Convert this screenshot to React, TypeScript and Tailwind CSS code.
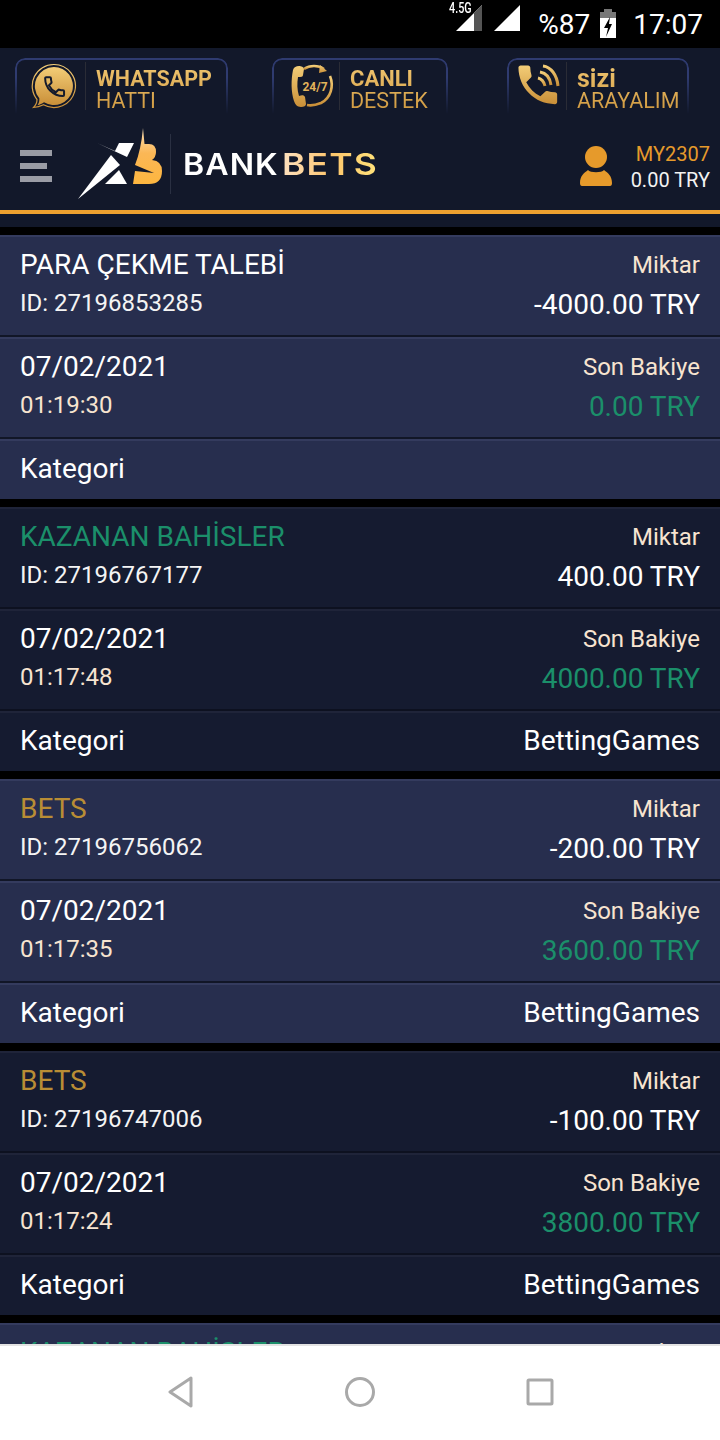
import React from "react";

type Tx = { title: string; titleColor: string; id: string; amount: string; date: string; time: string; balance: string; cat: string };

const txs: Tx[] = [
  { title: "PARA ÇEKME TALEBİ", titleColor: "text-white", id: "27196853285", amount: "-4000.00 TRY", date: "07/02/2021", time: "01:19:30", balance: "0.00 TRY", cat: "" },
  { title: "KAZANAN BAHİSLER", titleColor: "text-[#1b8f6a]", id: "27196767177", amount: "400.00 TRY", date: "07/02/2021", time: "01:17:48", balance: "4000.00 TRY", cat: "BettingGames" },
  { title: "BETS", titleColor: "text-[#b98d35]", id: "27196756062", amount: "-200.00 TRY", date: "07/02/2021", time: "01:17:35", balance: "3600.00 TRY", cat: "BettingGames" },
  { title: "BETS", titleColor: "text-[#b98d35]", id: "27196747006", amount: "-100.00 TRY", date: "07/02/2021", time: "01:17:24", balance: "3800.00 TRY", cat: "BettingGames" },
  { title: "KAZANAN BAHİSLER", titleColor: "text-[#1b8f6a]", id: "27196700000", amount: "400.00 TRY", date: "07/02/2021", time: "01:17:00", balance: "3900.00 TRY", cat: "BettingGames" },
];

function Gold({ id }: { id: string }) {
  return (
    <defs>
      <linearGradient id={id} x1="0" y1="0" x2="0" y2="1">
        <stop offset="0" stopColor="#f3cd77" />
        <stop offset="1" stopColor="#c98f38" />
      </linearGradient>
    </defs>
  );
}

const HANDSET = "M6.62 10.79c1.44 2.83 3.76 5.14 6.59 6.59l2.2-2.2c.27-.27.67-.36 1.02-.24 1.12.37 2.33.57 3.57.57.55 0 1 .45 1 1V20c0 .55-.45 1-1 1-9.39 0-17-7.61-17-17 0-.55.45-1 1-1h3.5c.55 0 1 .45 1 1 0 1.25.2 2.45.57 3.57.11.35.03.74-.25 1.02l-2.2 2.2z";

function WhatsIcon() {
  return (
    <svg width="46" height="46" viewBox="0 0 46 46" className="shrink-0">
      <Gold id="g1" />
      <path d="M23 1.500a21.500 21.500 0 1 1-10.500 40.300C9 43.500 6 44.300 2.500 44.500 5 42 6 39.500 6 36.500A21.500 21.500 0 0 1 23 1.500z" fill="none" stroke="url(#g1)" strokeWidth="1.200" />
      <path d="M23 4a19 19 0 1 1-10 35.200c-2 1.500-4 2.400-6.500 3 1.500-2 2-4.200 1.800-7A19 19 0 0 1 23 4z" fill="url(#g1)" />
      <g transform="translate(11 11) scale(1.050)">
        <path d={HANDSET} fill="none" stroke="#141a2c" strokeWidth="1.900" />
      </g>
    </svg>
  );
}

function SupportIcon() {
  return (
    <svg width="46" height="46" viewBox="0 0 46 46" className="shrink-0">
      <Gold id="g2" />
      <path d="M10 3c-3 0-5 1-6 4-2 10-2 22 1 31 1 3 3 6 7 6 3 0 5-1 5-3l-1-7c-1-2-3-2-6-1-2-6-2-13-1-19 3 0 5 0 5-2l1-6c0-2-3-3-5-3z" fill="url(#g2)" />
      <path d="M15 6c6-4 14-4 20 0" fill="none" stroke="url(#g2)" strokeWidth="2.600" />
      <path d="M31 2l7 6-8 2z" fill="url(#g2)" />
      <path d="M41 13c4 10 1 22-9 27-5 2-9 3-14 2" fill="none" stroke="url(#g2)" strokeWidth="2.600" />
      <text x="26" y="28" textAnchor="middle" fontSize="12" fontWeight="700" fontFamily="Roboto, sans-serif" fill="#e2b35a">24/7</text>
    </svg>
  );
}

function CallIcon() {
  return (
    <svg width="44" height="46" viewBox="0 0 44 46" className="shrink-0">
      <Gold id="g3" />
      <g transform="translate(-6 -4) scale(2.150)">
        <path d={HANDSET} fill="url(#g3)" />
      </g>
      <g fill="none" stroke="url(#g3)" strokeWidth="3">
        <path d="M20 15c4 1 6 4 7 8" />
        <path d="M22 9c6 1 10 6 11 13" />
        <path d="M25 3c8 1 14 9 15 20" />
      </g>
    </svg>
  );
}

function TopButton({ icon, a, b, className, dividerGap, aClass }: { icon: React.ReactNode; a: string; b: string; className: string; dividerGap: string; aClass: string }) {
  return (
    <div className={`relative h-[56px] pt-[4px] flex items-start ${className}`}>
      <div className="absolute inset-0 rounded-t-[10px] border-2 border-b-0 border-[#2f3b70] [mask-image:linear-gradient(to_bottom,black_35%,transparent_100%)]" />
      <div className={`flex items-center h-[48px] ${dividerGap}`}>
        {icon}
      </div>
      <div className="w-px h-[48px] bg-[#2a2c36]" />
      <div className="pl-[10px] flex flex-col pt-[6px] font-['Roboto',sans-serif] bg-gradient-to-b from-[#f2c873] to-[#cf9940] bg-clip-text text-transparent">
        <span className={`font-bold whitespace-nowrap leading-[22px] ${aClass}`}>{a}</span>
        <span className="whitespace-nowrap text-[21.5px] leading-[21px]">{b}</span>
      </div>
    </div>
  );
}

function StatusBar() {
  return (
    <div className="h-[48px] shrink-0 bg-black flex items-start justify-end pr-[17px] relative text-white font-['Roboto',sans-serif]">
      <span className="absolute left-[449px] top-[1px] origin-left scale-x-[0.72] text-[15px] font-medium leading-[15px]">4.5G</span>
      <svg width="26" height="26" viewBox="0 0 26 26" className="mt-[5px] mr-[12px]">
        <path d="M0 26 L26 0 V26 Z" fill="#ffffff" />
        <path d="M18 8 L26 0 V26 H18 Z" fill="#555555" />
      </svg>
      <svg width="26" height="26" viewBox="0 0 26 26" className="mt-[5px] mr-[18px]">
        <path d="M0 26 L26 0 V26 Z" fill="#ffffff" />
      </svg>
      <span className="text-[28px] leading-[50px] mr-[10px]">%87</span>
      <svg width="16" height="30" viewBox="0 0 16 30" className="mt-[9px] mr-[17px]">
        <rect x="4" y="0" width="8" height="3" fill="#777777" />
        <rect x="0" y="3" width="16" height="6" fill="#777777" />
        <rect x="0" y="9" width="16" height="20" fill="#ffffff" />
        <path d="M10 8 L4 19 H8 L6 28 L12 15 H9 Z" fill="#000000" />
      </svg>
      <span className="text-[28px] leading-[50px]">17:07</span>
    </div>
  );
}

function Logo() {
  return (
    <div className="flex items-center ml-[25px]">
      <svg width="90" height="74" viewBox="78 127 90 74" className="shrink-0">
        <defs>
          <linearGradient id="bl" x1="0" y1="0" x2="0" y2="1">
            <stop offset="0" stopColor="#fde0b5" />
            <stop offset="0.45" stopColor="#fbb756" />
            <stop offset="1" stopColor="#fdb63f" />
          </linearGradient>
        </defs>
        <path d="M98 143 L128 157 L135 143 H120 L116 151 Z" fill="#ffffff" />
        <path d="M79 199 L112 155 L121 165 Z" fill="#ffffff" />
        <path d="M106 184 L120 170 L128 184 Z" fill="#ffffff" />
        <path d="M144 128 L145.500 144 H150 Q157 144 157 152 Q157 157 153 160 Q163 161 163 171 Q163 184 150 184 H134 L136 171 L155 173 L136 165 Q142 150 144 128 Z" fill="url(#bl)" />
      </svg>
      <div className="w-px h-[60px] bg-[#2a3042] ml-[3px] mr-[12px]" />
      <span className="inline-block origin-left scale-x-[1.07] font-['Inter',sans-serif] font-semibold text-[30px] tracking-[1px] leading-none text-white">BANK</span>
      <span className="inline-block origin-left scale-x-[1.18] ml-[10px] font-['Inter',sans-serif] font-semibold text-[30px] tracking-[1px] leading-none bg-gradient-to-r from-[#fde1c0] via-[#fdc56c] to-[#ffe27a] bg-clip-text text-transparent">BETS</span>
    </div>
  );
}

function Header() {
  return (
    <div className="shrink-0 h-[179px] bg-[#12182a] flex flex-col">
      <div className="flex pl-[15px] pt-[10px] h-[66px]">
        <TopButton icon={<WhatsIcon />} a="WHATSAPP" aClass="text-[21.5px]" b="HATTI" className="w-[213px]" dividerGap="pl-[16px] pr-[8px]" />
        <TopButton icon={<SupportIcon />} a="CANLI" aClass="text-[22px]" b="DESTEK" className="w-[176px] ml-[44px]" dividerGap="pl-[17px] pr-[4px]" />
        <TopButton icon={<CallIcon />} a="sizi" aClass="text-[25px]" b="ARAYALIM" className="w-[182px] ml-[59px]" dividerGap="pl-[11px] pr-[4px]" />
      </div>
      <div className="flex-1 flex items-center pl-[20px] pr-[10px] pt-[4px]">
        <div className="flex flex-col gap-[7px] w-[32px] shrink-0 mt-[4px]">
          <div className="h-[6px] w-[32px] bg-[#9a9ca5]" />
          <div className="h-[6px] w-[27px] bg-[#9a9ca5]" />
          <div className="h-[6px] w-[32px] bg-[#9a9ca5]" />
        </div>
        <Logo />
        <div className="ml-auto flex items-center mt-[6px]">
          <svg width="34" height="42" viewBox="0 0 34 42" className="shrink-0 mr-[18px]">
            <circle cx="17" cy="11" r="11" fill="#e69a2b" />
            <path d="M9 24 C11 27 23 27 25 24 C29 27 33 30 33 37 Q33 40 31 40 H3 Q1 40 1 37 C1 30 5 27 9 24 Z" fill="#e69a2b" />
          </svg>
          <div className="flex flex-col items-end font-['Roboto',sans-serif] text-[20px] leading-[26px]">
            <span className="text-[#e69a2b]">MY2307</span>
            <span className="text-[#f2f2f2]">0.00 TRY</span>
          </div>
        </div>
      </div>
      <div className="h-[4px] bg-[#eda02f] mb-[13px] shrink-0" />
    </div>
  );
}

function Card({ tx, light }: { tx: Tx; light: boolean }) {
  const bg = light ? "bg-[#272e4e]" : "bg-[#151b30]";
  const top = light ? "border-t-[#343b5e]" : "border-t-[#1f2439]";
  const sep = light ? "bg-[#111627]" : "bg-[#0d1120]";
  return (
    <div className={`shrink-0 h-[264px] flex flex-col ${bg} font-['Roboto',sans-serif]`}>
      <div className={`h-[100px] border-t-2 ${top} px-[20px] flex justify-between`}>
        <div className="flex flex-col">
          <span className={`text-[28px] leading-[30px] mt-[13px] whitespace-nowrap ${tx.titleColor}`}>{tx.title}</span>
          <span className="text-[24px] leading-[28px] mt-[9px] text-[#f4f4f4]">ID: {tx.id}</span>
        </div>
        <div className="flex flex-col items-end">
          <span className="text-[24px] leading-[30px] mt-[13px] text-[#f7e4d0]">Miktar</span>
          <span className="text-[28px] leading-[32px] mt-[9px] text-white">{tx.amount}</span>
        </div>
      </div>
      <div className={`h-[2px] shrink-0 ${sep}`} />
      <div className={`h-[100px] border-t-2 ${top} px-[20px] flex justify-between`}>
        <div className="flex flex-col">
          <span className="text-[28px] leading-[32px] mt-[12px] text-white">{tx.date}</span>
          <span className="text-[24px] leading-[28px] mt-[8px] text-[#f7e4d0]">{tx.time}</span>
        </div>
        <div className="flex flex-col items-end">
          <span className="text-[24px] leading-[30px] mt-[13px] text-[#f7e4d0]">Son Bakiye</span>
          <span className="text-[28px] leading-[32px] mt-[9px] text-[#1b8f6a]">{tx.balance}</span>
        </div>
      </div>
      <div className={`h-[2px] shrink-0 ${sep}`} />
      <div className={`flex-1 border-t-2 ${top} px-[20px] pb-[2px] flex justify-between items-center text-[28px] text-white`}>
        <span>Kategori</span>
        <span>{tx.cat}</span>
      </div>
    </div>
  );
}

function NavBar() {
  return (
    <div className="shrink-0 h-[96px] bg-white border-t-2 border-[#e3e3e3] pb-[2px] flex items-center justify-center gap-[150px]">
      <svg width="28" height="32" viewBox="0 0 28 32"><path d="M25 2 L4 16 L25 30 Z" fill="none" stroke="#a9a9a9" strokeWidth="3" strokeLinejoin="round" /></svg>
      <svg width="32" height="32" viewBox="0 0 32 32"><circle cx="16" cy="16" r="13.500" fill="none" stroke="#a9a9a9" strokeWidth="3" /></svg>
      <svg width="28" height="28" viewBox="0 0 28 28"><rect x="2" y="2" width="24" height="24" rx="1" fill="none" stroke="#a9a9a9" strokeWidth="3" /></svg>
    </div>
  );
}

export default function App() {
  return (
    <div className="w-[720px] h-[1440px] flex flex-col overflow-hidden bg-black">
      <StatusBar />
      <Header />
      <div className="flex-1 min-h-0 overflow-hidden flex flex-col gap-[8px] pt-[8px]">
        {txs.map((t, i) => (
          <Card key={i} tx={t} light={i % 2 === 0} />
        ))}
      </div>
      <NavBar />
    </div>
  );
}
